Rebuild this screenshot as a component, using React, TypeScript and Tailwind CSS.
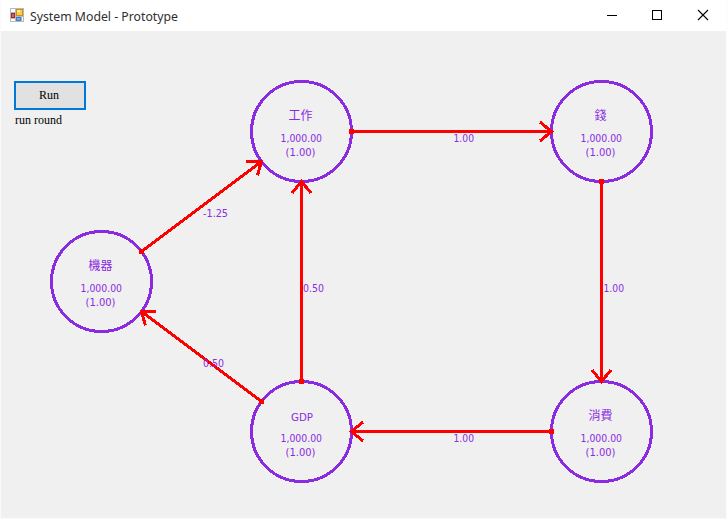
type Node = { x: number; y: number; name: string; nameY: number; w: number };
type Edge = { x1: number; y1: number; x2: number; y2: number; head: string; label: string; lx: number; ly: number; lw: number };

const nodes: Node[] = [
  { x: 301.5, y: 131.5, name: '工作', nameY: 120, w: 24 },
  { x: 601.5, y: 131.5, name: '錢', nameY: 120, w: 12 },
  { x: 101.5, y: 281.5, name: '機器', nameY: 270, w: 24 },
  { x: 301.5, y: 431.5, name: 'GDP', nameY: 421, w: 22 },
  { x: 601.5, y: 431.5, name: '消費', nameY: 420, w: 24 },
];

const edges: Edge[] = [
  { x1: 351.5, y1: 131.5, x2: 551.5, y2: 131.5, head: '540,122 551.5,131.5 540,141', label: '1.00', lx: 453.5, ly: 142, lw: 20.5 },
  { x1: 601.5, y1: 181.5, x2: 601.5, y2: 381.5, head: '592,370 601.5,381.5 611,370', label: '1.00', lx: 603.5, ly: 292, lw: 20.5 },
  { x1: 551.5, y1: 431.5, x2: 351.5, y2: 431.5, head: '363,422 351.5,431.5 363,441', label: '1.00', lx: 453.5, ly: 442, lw: 20.5 },
  { x1: 301.5, y1: 381.5, x2: 301.5, y2: 181.5, head: '292,193 301.5,181.5 311,193', label: '0.50', lx: 303, ly: 292, lw: 21 },
  { x1: 141.5, y1: 251.5, x2: 261.5, y2: 161.5, head: '246,161.5 261.5,161.5 257.5,175.5', label: '-1.25', lx: 203, ly: 217, lw: 25 },
  { x1: 261.5, y1: 401.5, x2: 141.5, y2: 311.5, head: '155.5,311.5 141.5,311.5 145.5,325.5', label: '0.50', lx: 203, ly: 367, lw: 21 },
];

function AppIcon() {
  return (
    <svg width="14" height="14" viewBox="0 0 14 14" shapeRendering="crispEdges">
      <rect width="14" height="14" fill="#b9b9b9" />
      <path d="M1 1h4v3H1zM1 11h4v2H1zM12 9h1v4h-1z" fill="#fff" />
      <rect x="1" y="5" width="4" height="5" fill="#a02a26" />
      <rect x="2" y="6" width="2" height="3" fill="#d4604f" />
      <rect x="6" y="1" width="7" height="7" fill="#c8921a" />
      <rect x="7" y="2" width="5" height="5" fill="#fdcf42" />
      <rect x="7" y="2" width="3" height="2" fill="#ffec9c" />
      <rect x="6" y="9" width="5" height="4" fill="#3c7bd6" />
      <rect x="7" y="10" width="3" height="2" fill="#76a9ee" />
    </svg>
  );
}

function Diagram() {
  return (
    <svg width="725" height="487" viewBox="1 31 725 487" className="col-start-1 row-start-1 block">
      <g fill="none" strokeWidth="3" shapeRendering="crispEdges">
        {nodes.map((n) => (
          <circle key={n.name} cx={n.x} cy={n.y} r="50" stroke="#8a2be2" />
        ))}
        {edges.map((e, i) => (
          <g key={i} stroke="#ff0000">
            <line x1={e.x1} y1={e.y1} x2={e.x2} y2={e.y2} />
            <polyline points={e.head} />
            <rect x={e.x1 - 2.5} y={e.y1 - 2.5} width="5" height="5" fill="#ff0000" stroke="none" />
          </g>
        ))}
      </g>
      <g fill="#8a2be2" className="font-['DejaVu_Sans_Condensed','DejaVu_Sans','Noto_Sans_CJK_TC',sans-serif] text-[11px]">
        {nodes.map((n) => (
          <g key={n.name}>
            <text
              x={n.x - 1 - n.w / 2 + (n.name === 'GDP' ? 1.5 : 0)}
              y={n.nameY}
              textLength={n.w}
              lengthAdjust="spacingAndGlyphs"
              className={n.name === 'GDP' ? '' : "font-['Noto_Sans_CJK_TC',sans-serif] text-[12px]"}
            >
              {n.name}
            </text>
            <text x={n.x - 21} y={n.y + 10.5} textLength="41.5" lengthAdjust="spacingAndGlyphs">1,000.00</text>
            <text x={n.x - 16} y={n.y + 24.5} textLength="30" lengthAdjust="spacingAndGlyphs">(1.00)</text>
          </g>
        ))}
        {edges.map((e, i) => (
          <text key={i} x={e.lx} y={e.ly} textLength={e.lw} lengthAdjust="spacingAndGlyphs">{e.label}</text>
        ))}
      </g>
    </svg>
  );
}

export default function App() {
  return (
    <div className="flex h-[519px] w-[727px] flex-col border border-t-0 border-[#fafafa] bg-[#f0f0f0]">
      <header className="flex h-[31px] shrink-0 items-center bg-white pl-[9px]">
        <span className="-mt-px">
          <AppIcon />
        </span>
        <h1 className="ml-[6px] flex-1 font-['Noto_Sans',sans-serif] text-[12px] text-[#202020]">
          <svg width="160" height="20" className="block">
            <text x="0" y="14.5" fill="#303030" textLength="148" lengthAdjust="spacingAndGlyphs">System Model - Prototype</text>
          </svg>
        </h1>
        <svg width="126" height="31" viewBox="600 0 126 31" fill="none" stroke="#000">
          <path d="M607 15.5h10M652.5 10.5h9v9h-9z" shapeRendering="crispEdges" />
          <path d="M698 10l10 10M708 10l-10 10" strokeWidth="1.1" />
        </svg>
      </header>
      <main className="grid flex-1 grid-cols-1 grid-rows-1">
        <Diagram />
        <div className="col-start-1 row-start-1 flex flex-col items-start pt-[50px] pl-[13px] font-['Liberation_Serif',serif] text-[12px] leading-[14px] text-black">
          <button className="h-[29px] w-[72px] border-2 border-[#0078d7] bg-[#e1e1e1] pr-[2px] pb-[2px]">Run</button>
          <span className="mt-[3px] ml-px">run round</span>
        </div>
      </main>
    </div>
  );
}
